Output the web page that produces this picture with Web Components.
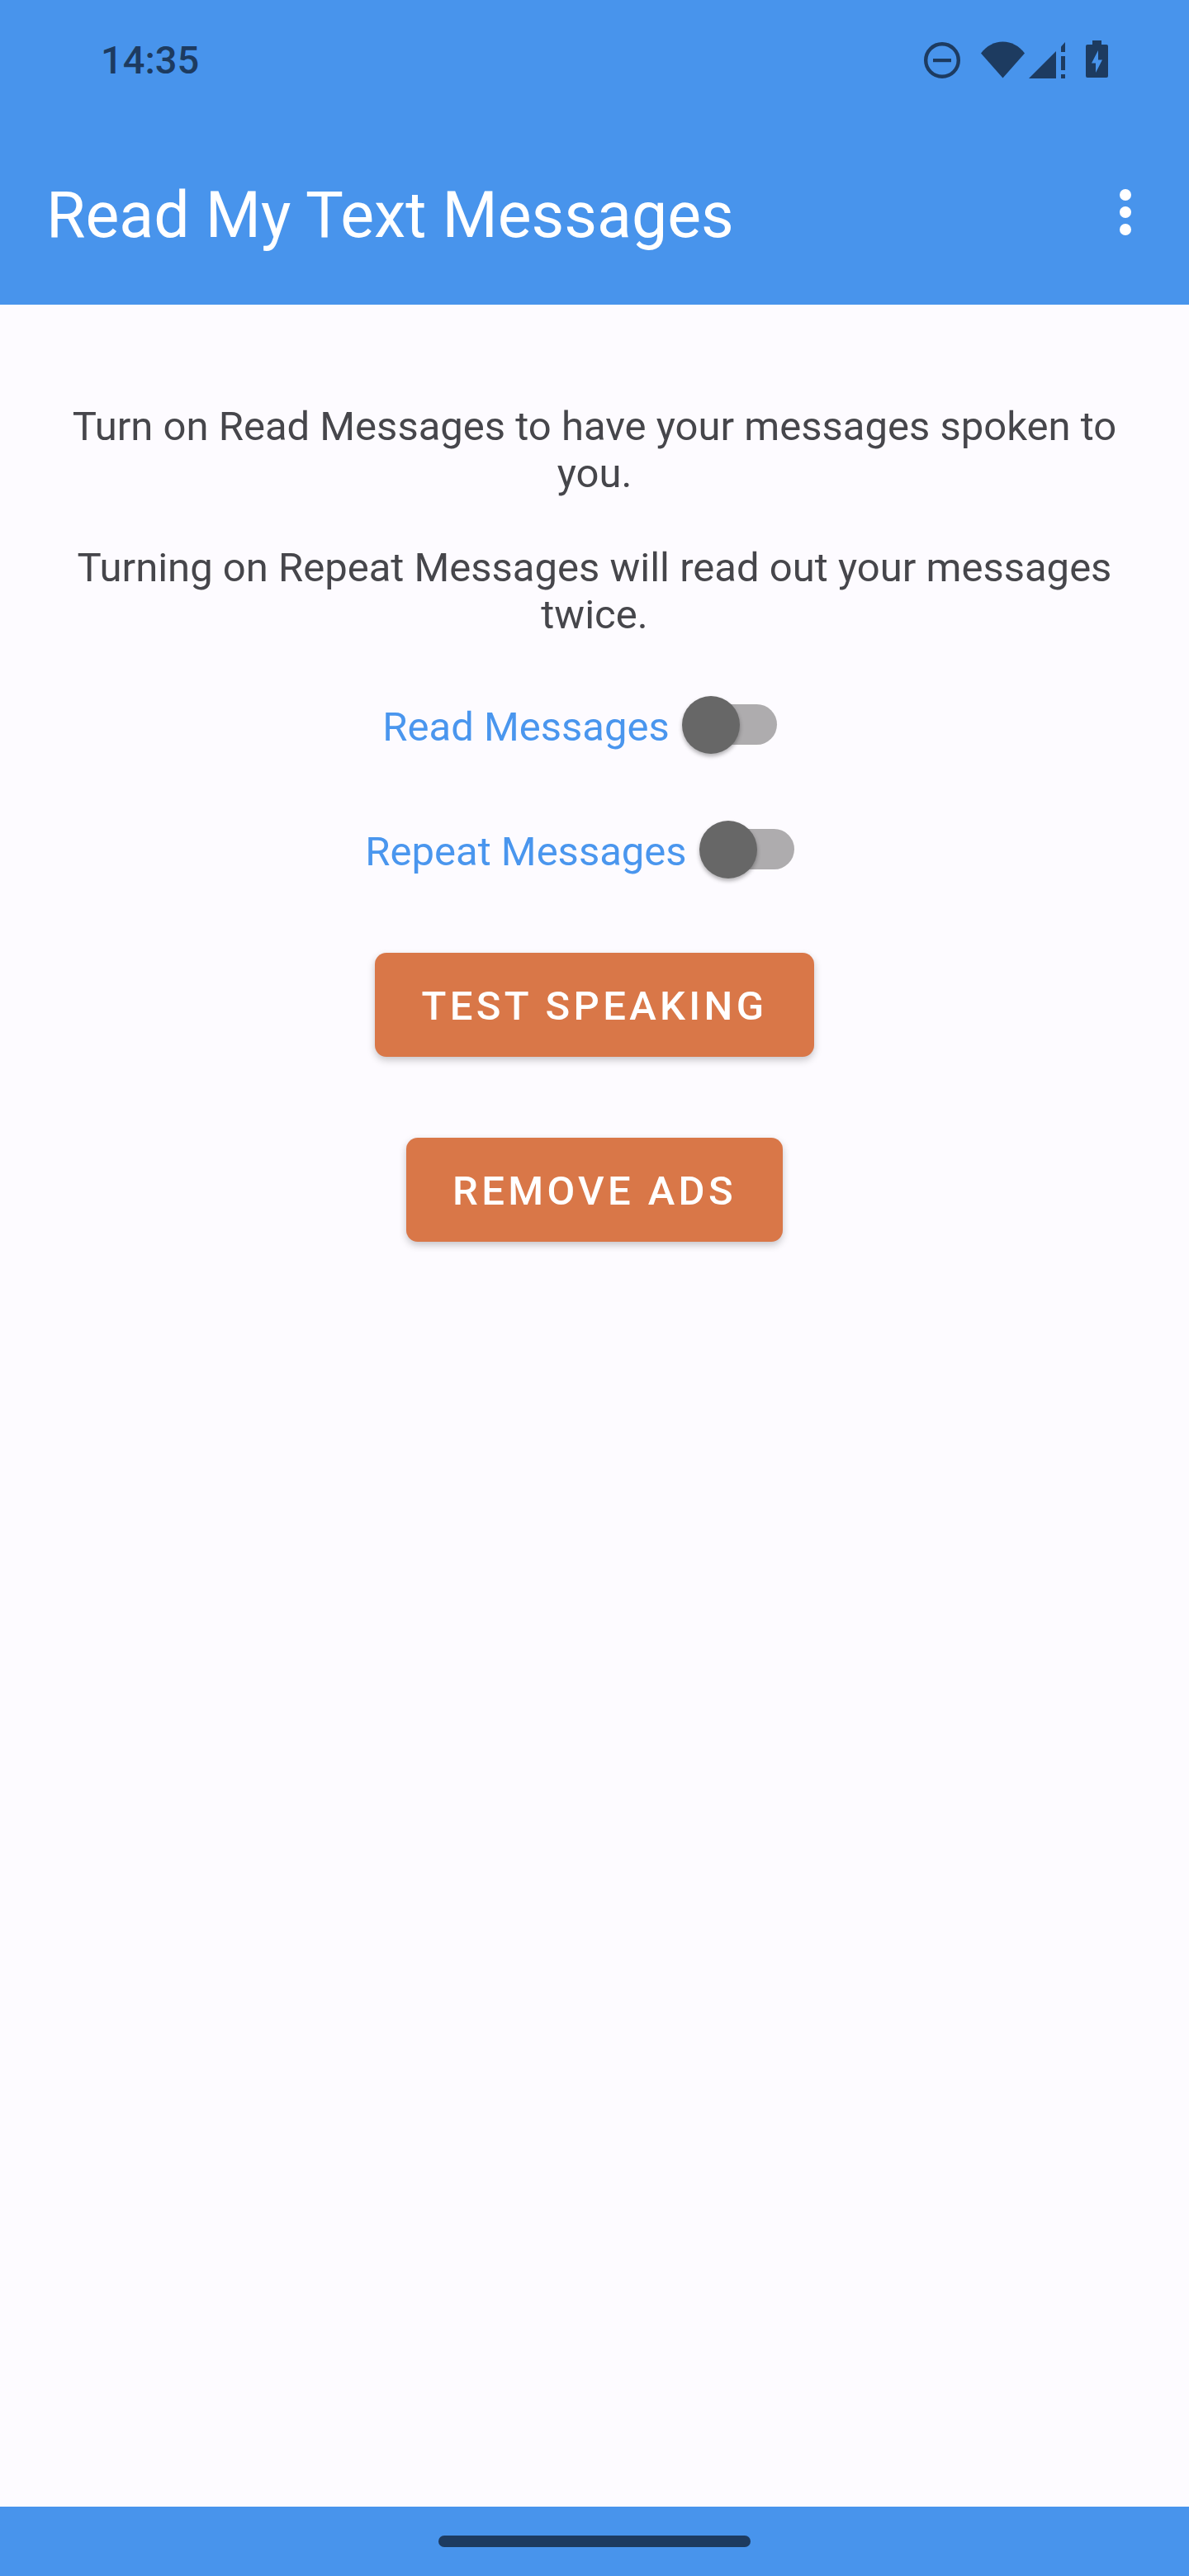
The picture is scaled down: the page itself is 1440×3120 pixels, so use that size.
<!DOCTYPE html>
<html>
<head>
<meta charset="utf-8">
<title>Read My Text Messages</title>
<style>
    html, body { margin: 0; height: 100%; }
    body { background: #fdfbff; font-family: Roboto, "Liberation Sans", sans-serif; }
    #app { display: flex; flex-direction: column; height: 3120px; }
</style>
</head>
<body>
<div id="app">
    <status-bar time="14:35"></status-bar>
    <app-bar>Read My Text Messages</app-bar>
    <main-panel>
        <info-text>Turn on Read Messages to have your messages spoken to you.</info-text>
        <info-text second>Turning on Repeat Messages will read out your messages twice.</info-text>
        <label-switch first>Read Messages</label-switch>
        <label-switch>Repeat Messages</label-switch>
        <action-button first>Test Speaking</action-button>
        <action-button>Remove Ads</action-button>
    </main-panel>
    <nav-bar></nav-bar>
</div>
<script>
class StatusBar extends HTMLElement {
    constructor() {
        super();
        const shadow = this.attachShadow({ mode: 'open' });
        shadow.innerHTML = `
            <style>
                :host {
                    display: flex;
                    align-items: flex-start;
                    height: 145px;
                    box-sizing: border-box;
                    padding: 49px 98px 0 122px;
                    background: #4894ec;
                    color: #1d3b60;
                }
                .time {
                    font: 500 47px/47px Roboto, sans-serif;
                    flex: 1;
                }
                .icons { display: flex; align-items: flex-start; }
                svg { display: block; fill: #1d3b60; }
                .dnd { margin-top: 2px; }
                .wifi { margin-left: 25px; margin-top: 1px; }
                .signal { margin-left: 5px; margin-top: 2px; }
                .battery { margin-left: 25px; }
            </style>
            <div class="time"></div>
            <div class="icons">
                <svg class="dnd" width="44" height="44" viewBox="0 0 44 44">
                    <circle cx="22" cy="22" r="19.8" fill="none" stroke="#1d3b60" stroke-width="4.4"/>
                    <rect x="11" y="20" width="22" height="4.2"/>
                </svg>
                <svg class="wifi" width="53" height="45" viewBox="0 0 53 45">
                    <path d="M0 14.5C7 5.5 16 .5 26.5 .5S46 5.5 53 14.5L26.5 44.5Z"/>
                </svg>
                <svg class="signal" width="44" height="44" viewBox="0 0 44 44">
                    <path d="M0 44L33 44L33 11Z"/>
                    <path d="M39 5.500L44 0L44 12L39 12Z"/>
                    <rect x="39" y="17" width="5" height="17"/>
                    <rect x="39" y="39" width="5" height="5"/>
                </svg>
                <svg class="battery" width="27" height="45" viewBox="0 0 27 45">
                    <path fill-rule="evenodd" d="M8 0H19V5H25A2 2 0 0 1 27 7V43A2 2 0 0 1 25 45H2A2 2 0 0 1 0 43V7A2 2 0 0 1 2 5H8ZM15 12L7 27.500H12V39L20 23.500H15Z"/>
                </svg>
            </div>
        `;
    }

    connectedCallback() {
        this.shadowRoot.querySelector('.time').textContent = this.getAttribute('time');
    }
}

class AppBar extends HTMLElement {
    constructor() {
        super();
        const shadow = this.attachShadow({ mode: 'open' });
        shadow.innerHTML = `
            <style>
                :host {
                    display: flex;
                    align-items: flex-start;
                    justify-content: space-between;
                    height: 224px;
                    box-sizing: border-box;
                    padding: 71px 70px 0 56px;
                    background: #4894ec;
                    color: #fff;
                    font: 400 77px/90px Roboto, sans-serif;
                }
                .dots { display: flex; flex-direction: column; gap: 7px; margin-top: 13px; }
                .dots i { display: block; width: 14px; height: 14px; border-radius: 50%; background: #fff; }
            </style>
            <div><slot></slot></div>
            <div class="dots"><i></i><i></i><i></i></div>
        `;
    }
}

class MainPanel extends HTMLElement {
    constructor() {
        super();
        const shadow = this.attachShadow({ mode: 'open' });
        shadow.innerHTML = `
            <style>
                :host {
                    display: flex;
                    flex-direction: column;
                    align-items: center;
                    flex: 1;
                    box-sizing: border-box;
                    padding: 119px 56px 0;
                    background: #fdfbff;
                }
            </style>
            <slot></slot>
        `;
    }
}

class InfoText extends HTMLElement {
    constructor() {
        super();
        const shadow = this.attachShadow({ mode: 'open' });
        shadow.innerHTML = `
            <style>
                :host {
                    display: block;
                    width: 100%;
                    text-align: center;
                    color: #46464b;
                    font: 400 49px/57px Roboto, sans-serif;
                }
                :host([second]) { margin-top: 57px; }
            </style>
            <slot></slot>
        `;
    }
}

class LabelSwitch extends HTMLElement {
    constructor() {
        super();
        const shadow = this.attachShadow({ mode: 'open' });
        shadow.innerHTML = `
            <style>
                :host {
                    display: flex;
                    align-items: center;
                    height: 70px;
                    margin-top: 81px;
                    color: #4a96ee;
                    font: 400 49px/57px Roboto, sans-serif;
                }
                :host([first]) { margin-top: 70px; }
                .label { padding-top: 4px; }
                .switch { position: relative; width: 151px; height: 70px; margin-left: 15px; }
                .track {
                    position: absolute;
                    left: 17px;
                    top: 10px;
                    width: 98px;
                    height: 49px;
                    border-radius: 25px;
                    background: #aeacae;
                }
                .thumb {
                    position: absolute;
                    left: 0;
                    top: 0;
                    width: 70px;
                    height: 70px;
                    border-radius: 50%;
                    background: #676767;
                    box-shadow: 0 3px 5px rgba(0, 0, 0, .3);
                }
            </style>
            <span class="label"><slot></slot></span>
            <div class="switch"><div class="track"></div><div class="thumb"></div></div>
        `;
    }
}

class ActionButton extends HTMLElement {
    constructor() {
        super();
        const shadow = this.attachShadow({ mode: 'open' });
        shadow.innerHTML = `
            <style>
                :host {
                    display: flex;
                    align-items: center;
                    height: 126px;
                    box-sizing: border-box;
                    padding: 3px 56px 0;
                    margin-top: 98px;
                    border-radius: 14px;
                    background: #d97748;
                    color: #fff;
                    font: 500 49px/57px Roboto, sans-serif;
                    letter-spacing: 4.37px;
                    text-transform: uppercase;
                    box-shadow: 0 4px 10px rgba(0, 0, 0, .22);
                }
                :host([first]) { margin-top: 90px; }
            </style>
            <slot></slot>
        `;
    }
}

class NavBar extends HTMLElement {
    constructor() {
        super();
        const shadow = this.attachShadow({ mode: 'open' });
        shadow.innerHTML = `
            <style>
                :host {
                    display: flex;
                    justify-content: center;
                    height: 84px;
                    box-sizing: border-box;
                    padding-top: 35px;
                    background: #4894ec;
                }
                .pill { width: 378px; height: 14px; border-radius: 7px; background: #1d3b60; }
            </style>
            <div class="pill"></div>
        `;
    }
}

customElements.define('status-bar', StatusBar);
customElements.define('app-bar', AppBar);
customElements.define('main-panel', MainPanel);
customElements.define('info-text', InfoText);
customElements.define('label-switch', LabelSwitch);
customElements.define('action-button', ActionButton);
customElements.define('nav-bar', NavBar);
</script>
</body>
</html>
